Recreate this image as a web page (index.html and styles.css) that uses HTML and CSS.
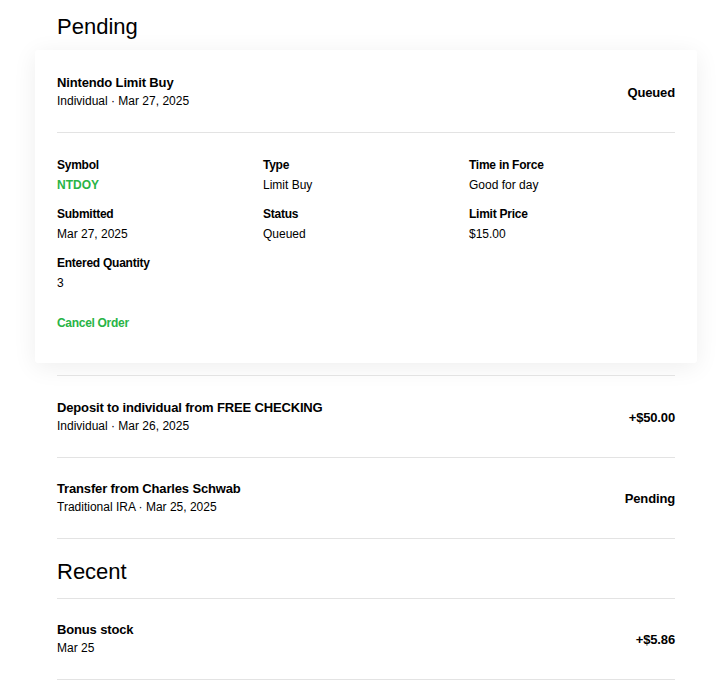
FILE: index.html
```html
<!DOCTYPE html>
<html>
<head>
<meta charset="utf-8">
<link rel="stylesheet" href="styles.css">
</head>
<body>
<div class="page">
  <h2 class="section-title first">Pending</h2>

  <div class="card">
    <div class="card-head">
      <div>
        <div class="title">Nintendo Limit Buy</div>
        <div class="sub">Individual · Mar 27, 2025</div>
      </div>
      <div class="right">Queued</div>
    </div>
    <div class="details">
      <div class="field"><div class="label">Symbol</div><div class="value green">NTDOY</div></div>
      <div class="field"><div class="label">Type</div><div class="value">Limit Buy</div></div>
      <div class="field"><div class="label">Time in Force</div><div class="value">Good for day</div></div>
      <div class="field"><div class="label">Submitted</div><div class="value">Mar 27, 2025</div></div>
      <div class="field"><div class="label">Status</div><div class="value">Queued</div></div>
      <div class="field"><div class="label">Limit Price</div><div class="value">$15.00</div></div>
      <div class="field"><div class="label">Entered Quantity</div><div class="value">3</div></div>
    </div>
    <a class="cancel">Cancel Order</a>
  </div>

  <div class="row">
    <div>
      <div class="title">Deposit to individual from FREE CHECKING</div>
      <div class="sub">Individual · Mar 26, 2025</div>
    </div>
    <div class="right">+$50.00</div>
  </div>
  <div class="row">
    <div>
      <div class="title">Transfer from Charles Schwab</div>
      <div class="sub">Traditional IRA · Mar 25, 2025</div>
    </div>
    <div class="right">Pending</div>
  </div>

  <h2 class="section-title recent">Recent</h2>
  <div class="row last">
    <div>
      <div class="title">Bonus stock</div>
      <div class="sub">Mar 25</div>
    </div>
    <div class="right">+$5.86</div>
  </div>
</div>
</body>
</html>
```

FILE: styles.css
```css
html, body {
  margin: 0;
  padding: 0;
  background: #ffffff;
}
body {
  font-family: "Liberation Sans", Arial, sans-serif;
  color: #000;
}
.page {
  width: 662px;
  margin-left: 35px;
}
.section-title {
  margin: 0 22px;
  font-size: 22px;
  font-weight: 400;
  line-height: 30px;
}
.section-title.first {
  padding: 12px 0 8px;
}
.section-title.recent {
  border-top: 1px solid #e3e3e3;
  border-bottom: 1px solid #e3e3e3;
  padding: 18px 0 11px;
}
.card {
  background: #fff;
  padding: 0 22px 30px;
  box-shadow: 0 4px 24px rgba(0, 0, 0, 0.07);
  margin-bottom: 12px;
  border-radius: 3px;
}
.card-head {
  display: flex;
  justify-content: space-between;
  align-items: center;
  padding: 24px 0 22px;
  border-bottom: 1px solid #e3e3e3;
}
.title {
  font-size: 13px;
  font-weight: 700;
  line-height: 18px;
  letter-spacing: -0.15px;
}
.sub {
  font-size: 12px;
  line-height: 18px;
}
.right {
  font-size: 13px;
  font-weight: 700;
  letter-spacing: -0.15px;
}
.details {
  display: grid;
  grid-template-columns: repeat(3, 1fr);
  row-gap: 9px;
  padding-top: 22px;
}
.label {
  font-size: 12px;
  font-weight: 700;
  line-height: 20px;
  letter-spacing: -0.25px;
}
.value {
  font-size: 12px;
  line-height: 20px;
}
.green {
  color: #28b446;
  font-weight: 700;
}
.cancel {
  display: block;
  margin-top: 20px;
  font-size: 12px;
  font-weight: 700;
  line-height: 20px;
  letter-spacing: -0.3px;
  color: #28b446;
}
.row {
  display: flex;
  justify-content: space-between;
  align-items: center;
  margin: 0 22px;
  padding: 22px 0;
  border-top: 1px solid #e3e3e3;
}
.card + .row {
  padding-top: 23px;
}
.row.last {
  border-top: none;
  border-bottom: 1px solid #e3e3e3;
}
```
